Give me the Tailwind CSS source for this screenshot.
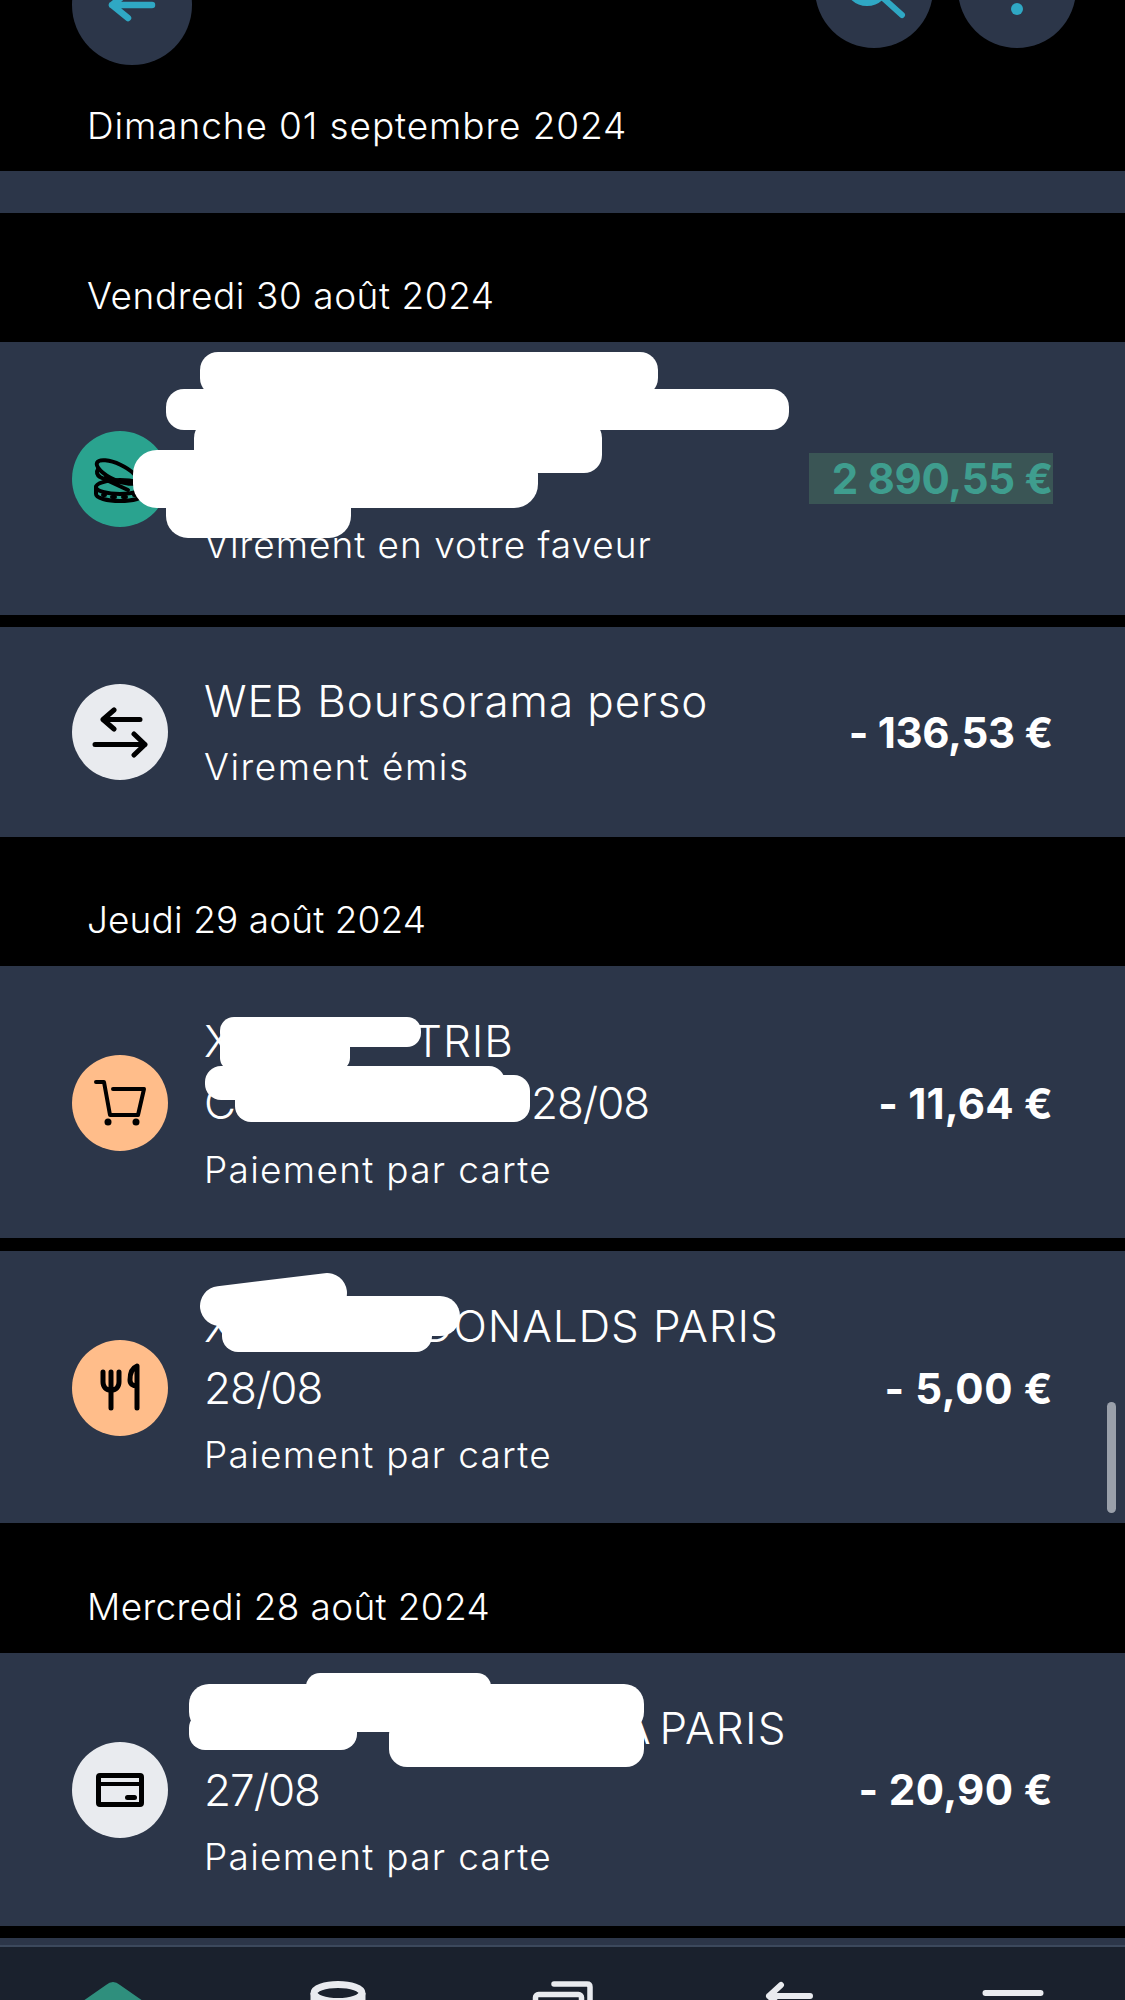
<!DOCTYPE html>
<html lang="fr">

<head>
  <meta charset="UTF-8">
  <meta name="viewport" content="width=device-width, initial-scale=1.0">
  <title>Mes opérations</title>
  <script src="https://cdn.jsdelivr.net/npm/@tailwindcss/browser@4"></script>
</head>

<body class="bg-black">
  <div class="relative w-[1125px] h-[2000px] overflow-hidden bg-black text-white font-['Inter','Liberation_Sans',sans-serif]">

    <!-- barre du haut -->
    <div class="flex justify-between items-start h-[65px] pl-[72px] pr-[49px]">
      <div class="w-[120px] h-[120px] -mt-[55px] shrink-0 rounded-full bg-[#2c3649] flex items-center justify-center">
        <svg class="w-[48px] h-[48px]" viewBox="0 0 48 48" fill="none" stroke="#2fa8c4" stroke-width="6.5" stroke-linecap="round" stroke-linejoin="round"><path d="M44 24H4M20 11 4 24l16 13" /></svg>
      </div>
      <div class="flex gap-[25px]">
        <div class="w-[118px] h-[118px] -mt-[70px] rounded-full bg-[#2c3649] flex items-center justify-center">
          <svg class="w-[64px] h-[64px]" viewBox="0 0 64 64" fill="none" stroke="#2fa8c4" stroke-width="6" stroke-linecap="round"><circle cx="25" cy="26" r="20" /><path d="m40 40 20 18" /></svg>
        </div>
        <div class="w-[118px] h-[118px] -mt-[70px] rounded-full bg-[#2c3649] flex items-center justify-center">
          <svg class="w-[12px] h-[52px]" viewBox="0 0 12 52" fill="#2fa8c4"><circle cx="6" cy="6" r="6" /><circle cx="6" cy="26" r="6" /><circle cx="6" cy="46" r="6" /></svg>
        </div>
      </div>
    </div>

    <!-- liste des opérations -->
    <div class="flex flex-col">
      <div class="h-[106px] pl-[87px] pt-[15px] flex items-center text-[37px] tracking-[0.9px] font-light">Dimanche 01 septembre 2024</div>
      <div class="h-[42px] bg-[#2c3649]"></div>

      <div class="h-[129px] pl-[87px] pt-[37px] flex items-center text-[37px] tracking-[0.55px] font-light">Vendredi 30 août 2024</div>
      <div class="h-[273px] bg-[#2c3649] pl-[72px] pr-[72px] flex items-center">
        <div class="w-[96px] h-[96px] shrink-0 rounded-full bg-[#2aa38f] flex items-center justify-center">
          <svg class="w-[56px] h-[56px]" viewBox="0 0 56 56" fill="none" stroke="#000" stroke-width="4" stroke-linecap="round" stroke-linejoin="round">
            <ellipse cx="25" cy="21" rx="22" ry="8" transform="rotate(25 25 21)" />
            <path d="M6 18c-2 3-1 6 2 8l28 13" />
            <path d="M14 26l3 1.5M23 30l3 1.5" />
            <ellipse cx="28" cy="36" rx="24" ry="7" />
            <path d="M4 36v7c0 4 11 7 24 7s24-3 24-7v-7" />
            <path d="M11 44h2M20 46h3M31 46h3M42 44h2" />
          </svg>
        </div>
        <div class="flex-1 pl-[36px] self-stretch flex flex-col justify-end pb-[48px] text-[37px] tracking-[1px] font-light leading-[44px]">Virement en votre faveur</div>
        <div class="bg-[#3a5555] text-[#3f9d8e] text-[42px] tracking-[-0.3px] font-bold leading-[51px] pl-[23px] whitespace-nowrap">2 890,55 €</div>
      </div>

      <div class="h-[210px] mt-[12px] bg-[#2c3649] pl-[72px] pr-[72px] flex items-center">
        <div class="w-[96px] h-[96px] shrink-0 rounded-full bg-[#e9ebef] flex items-center justify-center">
          <svg class="w-[56px] h-[56px]" viewBox="0 0 56 56" fill="none" stroke="#000" stroke-width="5" stroke-linecap="round" stroke-linejoin="round"><path d="M48 15.5H11M22 6 11 15.5 22 25M3 40.500h50M42 30l11 10.500L42 51" /></svg>
        </div>
        <div class="flex-1 pl-[36px] flex flex-col gap-[18px] font-light">
          <div class="text-[44px] tracking-[0.9px] leading-[52px]">WEB Boursorama perso</div>
          <div class="text-[37px] tracking-[1.5px] leading-[44px]">Virement émis</div>
        </div>
        <div class="text-[42px] tracking-[-0.3px] font-bold">- 136,53 €</div>
      </div>

      <div class="h-[129px] pl-[87px] pt-[37px] flex items-center text-[37px] tracking-[0.1px] font-light">Jeudi 29 août 2024</div>
      <div class="h-[272px] bg-[#2c3649] pl-[72px] pr-[72px] pt-[2px] flex items-center">
        <div class="w-[96px] h-[96px] shrink-0 rounded-full bg-[#ffbd8a] flex items-center justify-center">
          <svg class="w-[56px] h-[56px]" viewBox="0 0 56 56" fill="none" stroke="#000" stroke-width="4" stroke-linecap="round" stroke-linejoin="round"><path d="M4 7h8l6 33h28l6-26H21" /><circle cx="16" cy="47" r="3.500" fill="#000" stroke="none" /><circle cx="44" cy="47" r="3.500" fill="#000" stroke="none" /></svg>
        </div>
        <div class="flex-1 pl-[36px] pb-[4px] font-light">
          <div class="text-[44px] tracking-[0.9px] leading-[62px]">X<span class="pl-[180px]">TRIB</span></div>
          <div class="text-[44px] tracking-[0.9px] leading-[62px]">C<span class="pl-[294px] tracking-[-1px]">28/08</span></div>
          <div class="text-[37px] tracking-[1.3px] leading-[44px] mt-[14px]">Paiement par carte</div>
        </div>
        <div class="text-[42px] tracking-[0.2px] font-bold">- 11,64 €</div>
      </div>

      <div class="h-[272px] mt-[13px] bg-[#2c3649] pl-[72px] pr-[72px] pt-[2px] flex items-center">
        <div class="w-[96px] h-[96px] shrink-0 rounded-full bg-[#ffbd8a] flex items-center justify-center">
          <svg class="w-[56px] h-[56px]" viewBox="0 0 56 56" fill="none" stroke="#000" stroke-width="5" stroke-linecap="round" stroke-linejoin="round"><path d="M11 12v10c0 5 3 8 8 8s8-3 8-8V12M19 12v36M45 48V6c-5 2-7 8-7 14 0 4 3 6 7 6" /></svg>
        </div>
        <div class="flex-1 pl-[36px] pb-[4px] font-light">
          <div class="text-[44px] tracking-[0.9px] leading-[62px] whitespace-nowrap">X<span class="pl-[187px]">DONALDS PARIS</span></div>
          <div class="text-[44px] tracking-[-1px] leading-[62px]">28/08</div>
          <div class="text-[37px] tracking-[1.3px] leading-[44px] mt-[14px]">Paiement par carte</div>
        </div>
        <div class="text-[42px] tracking-[0.6px] font-bold">- 5,00 €</div>
      </div>

      <div class="h-[130px] pl-[87px] pt-[37px] flex items-center text-[37px] tracking-[0.35px] font-light">Mercredi 28 août 2024</div>
      <div class="h-[273px] bg-[#2c3649] pl-[72px] pr-[72px] flex items-center">
        <div class="w-[96px] h-[96px] shrink-0 rounded-full bg-[#e9ebef] flex items-center justify-center">
          <svg class="w-[56px] h-[56px]" viewBox="0 0 56 56" fill="none" stroke="#000" stroke-width="5" stroke-linecap="round" stroke-linejoin="round"><rect x="6.500" y="13.500" width="43" height="29" rx="1.500" /><path d="M6 22h44" stroke-width="4" /><path d="M35.500 35.500h7" stroke-width="5" /></svg>
        </div>
        <div class="flex-1 pl-[36px] pb-[4px] font-light">
          <div class="text-[44px] tracking-[1.2px] [word-spacing:-6px] leading-[62px] whitespace-nowrap"><span class="pl-[417px]">A PARIS</span></div>
          <div class="text-[44px] tracking-[-1px] leading-[62px]">27/08</div>
          <div class="text-[37px] tracking-[1.3px] leading-[44px] mt-[14px]">Paiement par carte</div>
        </div>
        <div class="text-[42px] tracking-[0.4px] font-bold">- 20,90 €</div>
      </div>

      <div class="h-[7px] mt-[12px] bg-[#2c3649]"></div>
      <!-- navigation du bas -->
      <div class="h-[60px] bg-[#1a212d] border-t-2 border-[#3c495d] pt-[34px] grid grid-cols-5 justify-items-center items-start">
        <svg class="w-[64px] h-[48px]" viewBox="0 0 64 48" fill="#2f8f7d"><path d="M25 4Q32-2 39 4L62 20V48H2V20Z" /></svg>
        <svg class="w-[64px] h-[48px]" viewBox="0 0 64 48" fill="none" stroke="#e9ebef" stroke-width="7"><ellipse cx="32" cy="12" rx="24" ry="8.500" /><path d="M8 12v36M56 12v36" /></svg>
        <svg class="w-[64px] h-[48px]" viewBox="0 0 64 48" fill="none" stroke="#e9ebef" stroke-width="5.500" stroke-linecap="round"><path d="M23 3h33q3 0 3 3v30" /><rect x="4.500" y="13.500" width="46" height="40" rx="3" /></svg>
        <svg class="w-[64px] h-[48px]" viewBox="0 0 64 48" fill="none" stroke="#e9ebef" stroke-width="6" stroke-linecap="round" stroke-linejoin="round"><path d="M54 15H13M25 4 13 15l12 11" /></svg>
        <svg class="w-[64px] h-[48px]" viewBox="0 0 64 48" fill="#e9ebef"><rect x="1.500" y="9" width="61" height="6" rx="3" /><rect x="1.500" y="33" width="61" height="6" rx="3" /></svg>
      </div>
    </div>

    <!-- masquage au feutre blanc -->
    <svg class="absolute left-0 top-0 w-[1125px] h-[2000px] pointer-events-none" viewBox="0 0 1125 2000" fill="#fff">
      <rect x="200" y="352" width="458" height="44" rx="18" />
      <rect x="166" y="389" width="623" height="41" rx="18" />
      <rect x="194" y="420" width="408" height="53" rx="18" />
      <rect x="133" y="450" width="405" height="58" rx="24" />
      <rect x="166" y="480" width="185" height="58" rx="22" />
      <rect x="220" y="1017" width="201" height="30" rx="14" />
      <rect x="220" y="1030" width="130" height="40" rx="12" />
      <rect x="205" y="1066" width="300" height="34" rx="16" />
      <rect x="235" y="1075" width="295" height="47" rx="16" />
      <path d="M220 1306 327 1293" stroke="#fff" stroke-width="40" stroke-linecap="round" />
      <rect x="217" y="1296" width="243" height="40" rx="20" />
      <rect x="222" y="1318" width="210" height="34" rx="16" />
      <rect x="306" y="1673" width="185" height="30" rx="14" />
      <rect x="189" y="1684" width="455" height="48" rx="20" />
      <rect x="189" y="1712" width="168" height="38" rx="16" />
      <rect x="389" y="1716" width="255" height="51" rx="18" />
    </svg>

    <!-- ascenseur -->
    <div class="absolute left-[1107px] top-[1402px] w-[9px] h-[111px] rounded-full bg-[#9aa0aa]"></div>
  </div>
</body>

</html>
